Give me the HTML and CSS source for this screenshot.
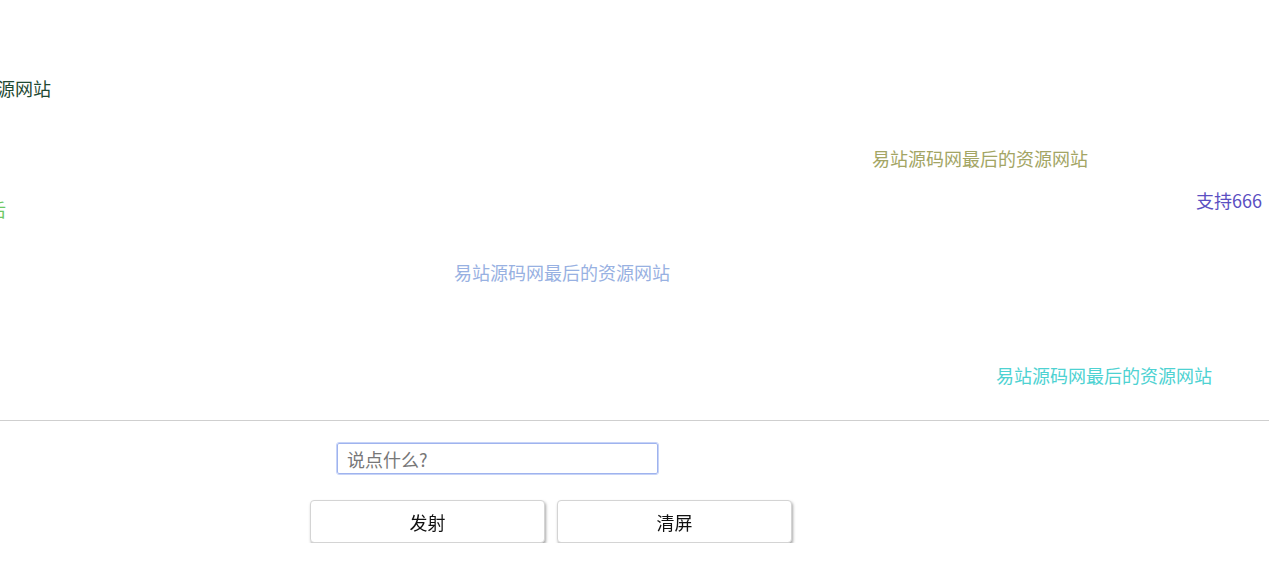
FILE: index.html
```html
<!DOCTYPE html>
<html lang="zh-CN">
<head>
  <meta charset="UTF-8" />
  <title>弹幕</title>
  <link rel="stylesheet" href="styles.css">
</head>
<body>
  <div class="screen" id="screen">
    <span class="bullet" style="left: -165px; top: 76px; color: #1f4a33;">易站源码网最后的资源网站</span>
    <span class="bullet" style="left: -120px; top: 197px; color: #6cc864;">易站源码网最后</span>
    <span class="bullet" style="left: 872px; top: 146px; color: #a3a564;">易站源码网最后的资源网站</span>
    <span class="bullet" style="left: 1196px; top: 188px; color: #5b4fc2;">支持666</span>
    <span class="bullet" style="left: 454px; top: 260px; color: #98b1e2;">易站源码网最后的资源网站</span>
    <span class="bullet" style="left: 996px; top: 363px; color: #4ed2d2;">易站源码网最后的资源网站</span>
  </div>

  <div class="controls">
    <div class="input-row">
      <input type="text" class="msg" placeholder="说点什么?" autofocus>
    </div>
    <div class="btn-row">
      <button class="btn">发射</button>
      <button class="btn">清屏</button>
    </div>
  </div>
</body>
</html>
```

FILE: styles.css
```css
body {
  margin: 0;
  font-family: "Noto Sans CJK SC", "Liberation Sans", sans-serif;
  background: #fff;
}
.screen {
  position: relative;
  height: 420px;
  overflow: hidden;
  border-bottom: 1px solid #cfcfcf;
}
.bullet {
  position: absolute;
  white-space: nowrap;
  font-size: 18px;
  line-height: 24px;
}
.input-row {
  padding-left: 337px;
  margin-top: 22px;
  display: flex;
}
.msg {
  box-sizing: border-box;
  width: 321px;
  height: 31px;
  margin: 0;
  padding: 0 9px;
  border: 1px solid #9fb3ee;
  border-radius: 2px;
  outline: 1px solid #c6d3f7;
  font-family: inherit;
  font-size: 18px;
  line-height: 29px;
  color: #333;
}
.msg::placeholder {
  color: #777;
}
.btn-row {
  display: flex;
  gap: 12px;
  padding-left: 310px;
  margin-top: 26px;
}
.btn {
  box-sizing: border-box;
  width: 235px;
  height: 43px;
  background: #fff;
  border: 1px solid #d4d4d4;
  border-radius: 4px;
  box-shadow: 1px 2px 3px #a8a8a8;
  font-family: inherit;
  font-size: 18px;
  line-height: 24px;
  color: #111;
  cursor: pointer;
}
```
